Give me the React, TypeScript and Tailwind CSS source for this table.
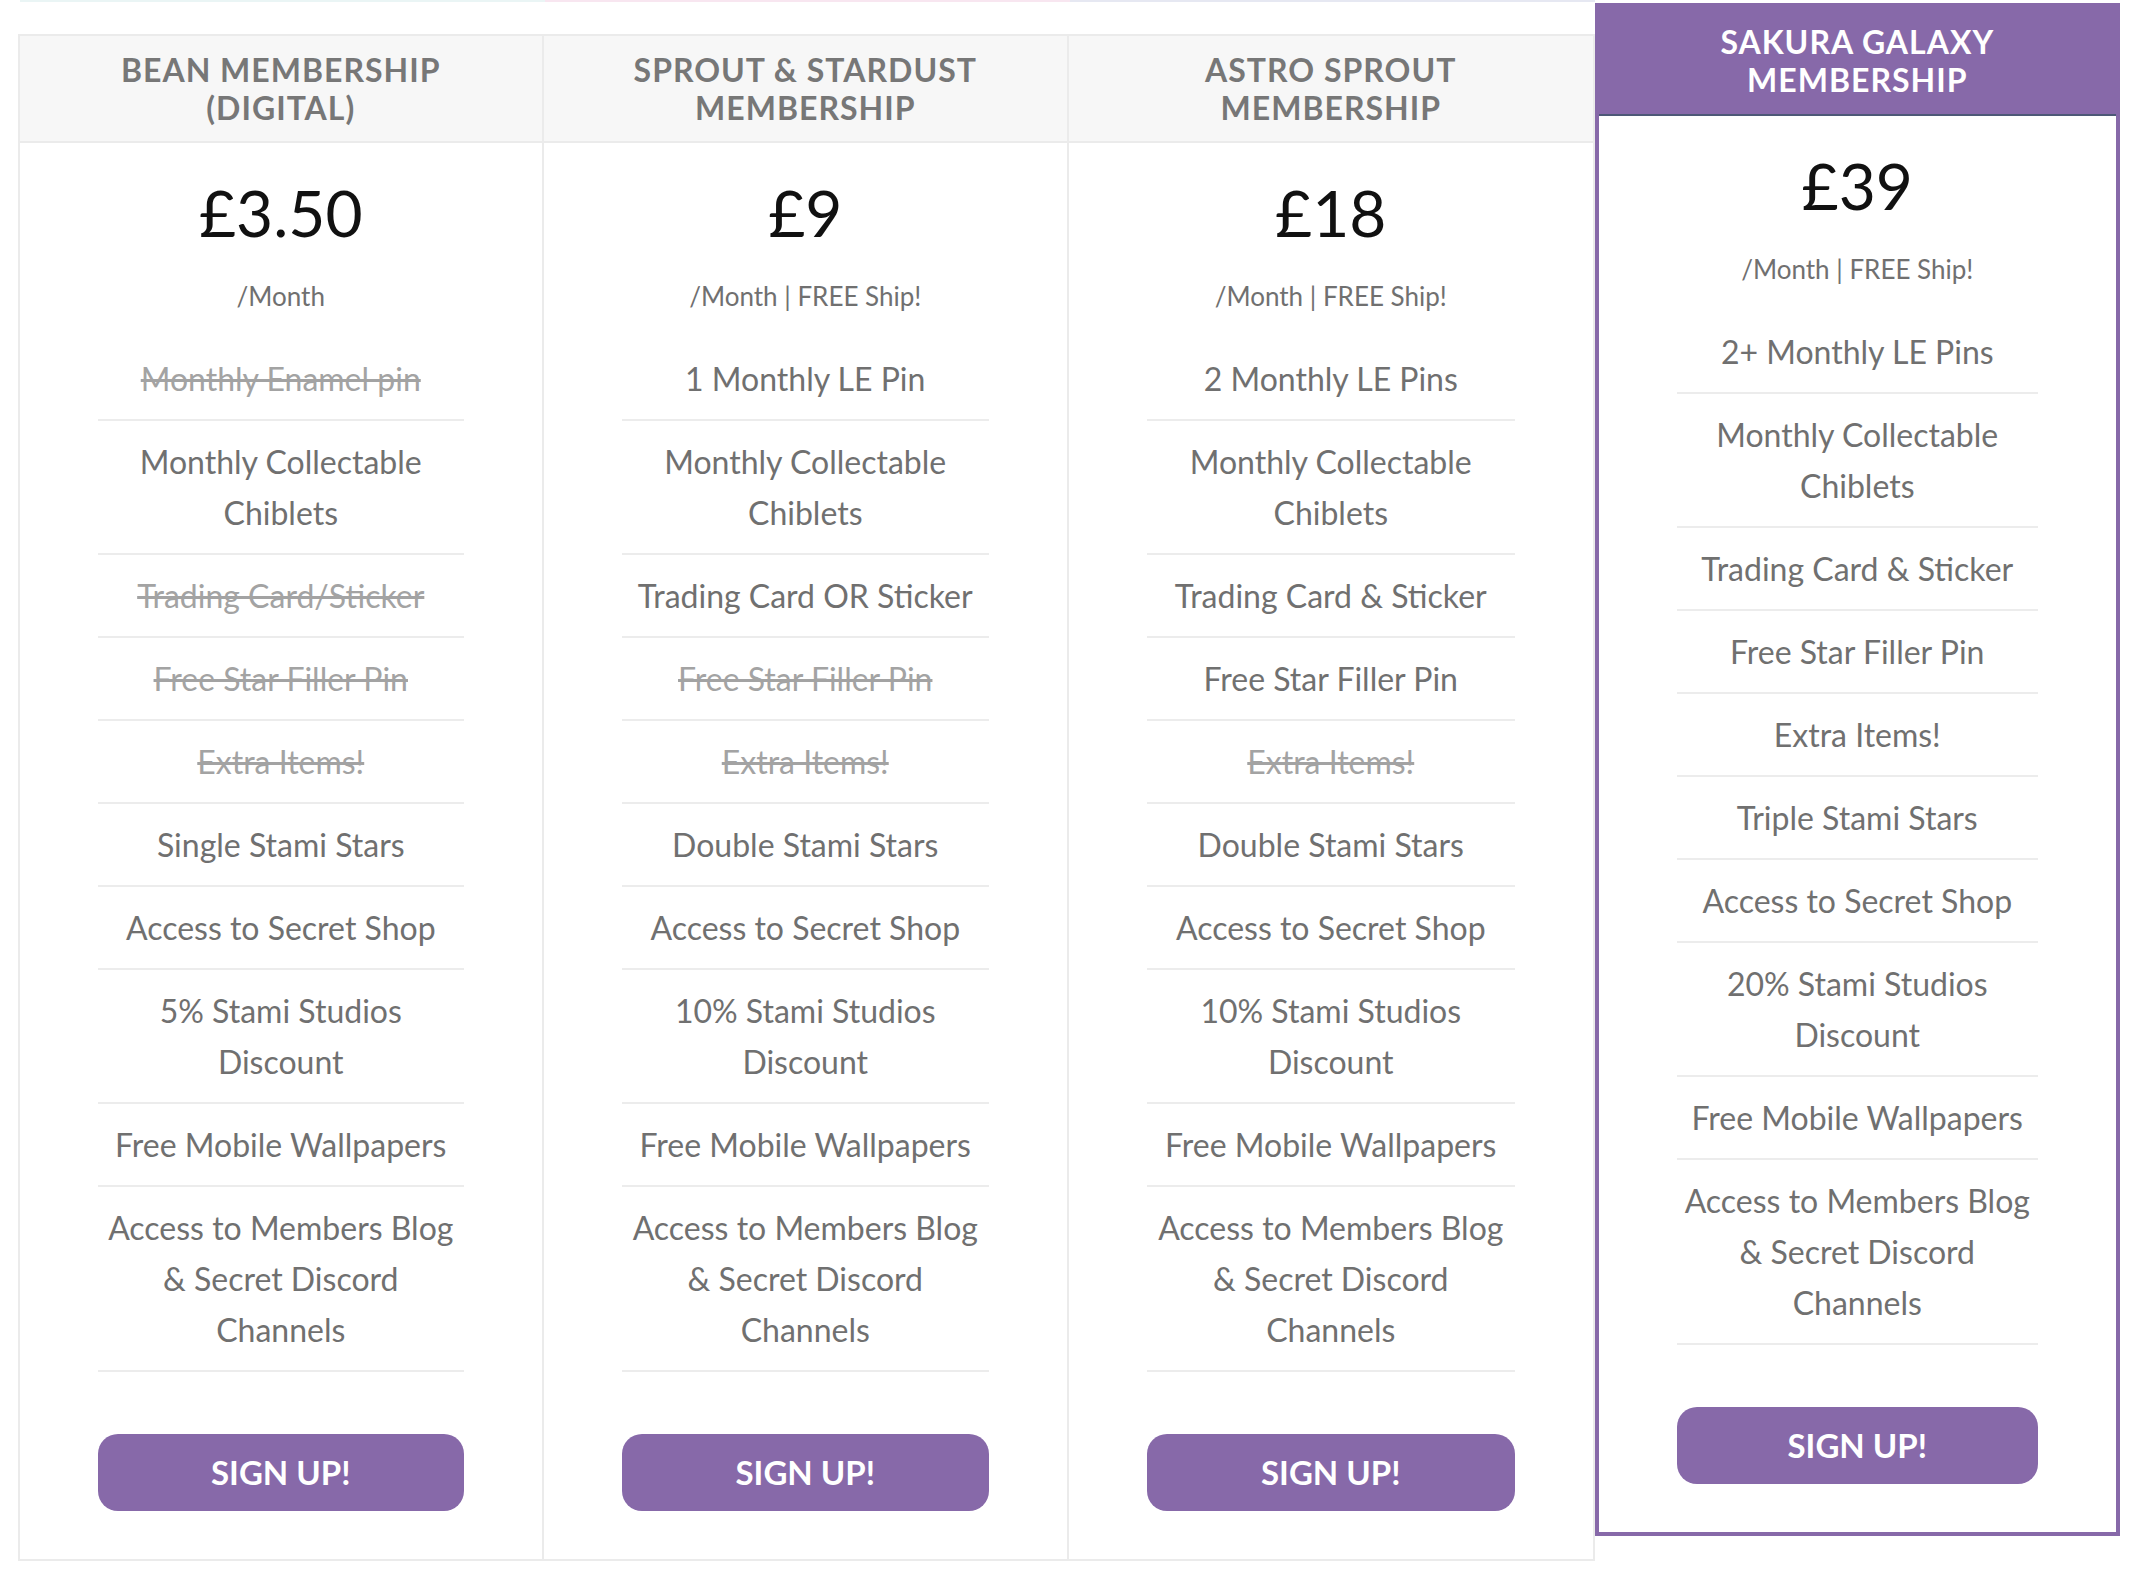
import React from "react";

type Feature = { lines: string[]; off?: boolean };

type Plan = {
  title: string[];
  price: string;
  period: string;
  features: Feature[];
  featured?: boolean;
};

const f = (text: string, off = false): Feature => ({ lines: text.split("|"), off });

const plans: Plan[] = [
  {
    title: ["BEAN MEMBERSHIP", "(DIGITAL)"],
    price: "£3.50",
    period: "/Month",
    features: [
      f("Monthly Enamel pin", true),
      f("Monthly Collectable|Chiblets"),
      f("Trading Card/Sticker", true),
      f("Free Star Filler Pin", true),
      f("Extra Items!", true),
      f("Single Stami Stars"),
      f("Access to Secret Shop"),
      f("5% Stami Studios|Discount"),
      f("Free Mobile Wallpapers"),
      f("Access to Members Blog|& Secret Discord|Channels"),
    ],
  },
  {
    title: ["SPROUT & STARDUST", "MEMBERSHIP"],
    price: "£9",
    period: "/Month | FREE Ship!",
    features: [
      f("1 Monthly LE Pin"),
      f("Monthly Collectable|Chiblets"),
      f("Trading Card OR Sticker"),
      f("Free Star Filler Pin", true),
      f("Extra Items!", true),
      f("Double Stami Stars"),
      f("Access to Secret Shop"),
      f("10% Stami Studios|Discount"),
      f("Free Mobile Wallpapers"),
      f("Access to Members Blog|& Secret Discord|Channels"),
    ],
  },
  {
    title: ["ASTRO SPROUT", "MEMBERSHIP"],
    price: "£18",
    period: "/Month | FREE Ship!",
    features: [
      f("2 Monthly LE Pins"),
      f("Monthly Collectable|Chiblets"),
      f("Trading Card & Sticker"),
      f("Free Star Filler Pin"),
      f("Extra Items!", true),
      f("Double Stami Stars"),
      f("Access to Secret Shop"),
      f("10% Stami Studios|Discount"),
      f("Free Mobile Wallpapers"),
      f("Access to Members Blog|& Secret Discord|Channels"),
    ],
  },
  {
    title: ["SAKURA GALAXY", "MEMBERSHIP"],
    price: "£39",
    period: "/Month | FREE Ship!",
    featured: true,
    features: [
      f("2+ Monthly LE Pins"),
      f("Monthly Collectable|Chiblets"),
      f("Trading Card & Sticker"),
      f("Free Star Filler Pin"),
      f("Extra Items!"),
      f("Triple Stami Stars"),
      f("Access to Secret Shop"),
      f("20% Stami Studios|Discount"),
      f("Free Mobile Wallpapers"),
      f("Access to Members Blog|& Secret Discord|Channels"),
    ],
  },
];

function PlanCard({ plan, first }: { plan: Plan; first: boolean }) {
  const wrap = plan.featured
    ? "border-4 border-[#8769a9] -mt-[31px]"
    : first
    ? "border-2 border-[#ebebeb]"
    : "border-2 border-l-0 border-[#ebebeb]";

  const head = plan.featured
    ? "bg-[#8769a9] text-white h-[109px] border-b-2 border-[#4d5877]"
    : "bg-[#f7f7f7] text-[#777777] h-[107px] border-b-2 border-[#ebebeb]";

  return (
    <div className={`flex flex-col bg-white ${wrap}`}>
      <div
        className={`flex flex-col items-center justify-center text-center text-[32px] font-bold leading-[38px] tracking-[1px] ${head}`}
      >
        {plan.title.map((t) => (
          <div key={t}>{t}</div>
        ))}
      </div>

      <div className="flex flex-col px-[78px] pb-[48px]">
        <div className="pt-[34px] text-center text-[64px] leading-[72px] text-[#111111]">
          {plan.price}
        </div>
        <div className="mt-[35px] text-center text-[26px] leading-[24px] text-[#707070]">
          {plan.period}
        </div>

        <ul className="mt-[30px]">
          {plan.features.map((ft, i) => (
            <li
              key={i}
              className={`border-b-2 border-[#ececec] py-[15px] text-center text-[32px] leading-[51px] ${
                ft.off ? "text-[#a3a3a3] line-through" : "text-[#707070]"
              }`}
            >
              {ft.lines.map((l, j) => (
                <div key={j}>{l}</div>
              ))}
            </li>
          ))}
        </ul>

        <button className="mt-[62px] h-[77px] w-full rounded-[20px] bg-[#8769a9] text-[33px] font-bold text-white">
          SIGN UP!
        </button>
      </div>
    </div>
  );
}

export default function App() {
  return (
    <div
      className="min-h-screen bg-white"
      style={{ fontFamily: "Lato, 'Open Sans', sans-serif" }}
    >
      <div className="flex h-[2px] px-[20px]">
        <div className="w-[525px] bg-[#eaf5f5]" />
        <div className="w-[525px] bg-[#f8e6f0]" />
        <div className="w-[525px] bg-[#e6e8f2]" />
      </div>
      <div className="grid grid-cols-4 items-start px-[18px] pt-[32px]">
        {plans.map((p, i) => (
          <PlanCard key={p.title[0]} plan={p} first={i === 0} />
        ))}
      </div>
    </div>
  );
}
